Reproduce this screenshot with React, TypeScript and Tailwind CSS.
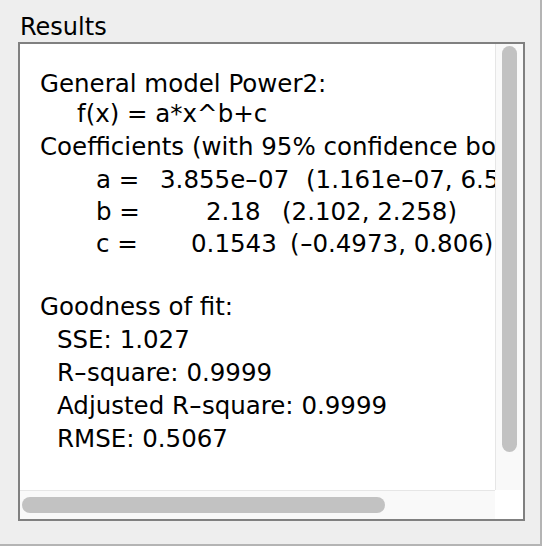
const font = "font-['DejaVu_Sans','Liberation_Sans',sans-serif]";

type CoefRow = {
  name: string;
  labelW: string;
  valueW: string;
  value: string;
  ci: string;
  h: string;
};

const coefs: CoefRow[] = [
  { name: "a =", labelW: "w-[64px]", valueW: "w-[146px]", value: "3.855e-07", ci: "(1.161e-07, 6.549e-07)", h: "h-[32px]" },
  { name: "b =", labelW: "w-[110px]", valueW: "w-[76px]", value: "2.18", ci: "(2.102, 2.258)", h: "h-[32px]" },
  { name: "c =", labelW: "w-[95px]", valueW: "w-[99px]", value: "0.1543", ci: "(-0.4973, 0.806)", h: "h-[33px]" },
];

const stats = ["SSE: 1.027", "R-square: 0.9999", "Adjusted R-square: 0.9999", "RMSE: 0.5067"];

// the original font draws its hyphen wide, like a minus sign
function Dashed({ text }: { text: string }) {
  const parts = text.split("-");
  return (
    <>
      {parts.map((p, i) => (
        <span key={i}>
          {i > 0 && <span className="mx-[2px] inline-block scale-x-[1.5]">-</span>}
          {p}
        </span>
      ))}
    </>
  );
}

function Line({ h, indent, children }: { h: string; indent: string; children: React.ReactNode }) {
  return (
    <div className={`${h} ${indent} whitespace-pre leading-[33px]`}>{children}</div>
  );
}

function ResultsText() {
  return (
    <div className={`flex-1 min-w-0 overflow-hidden bg-white pt-[23px] text-[24.5px] text-black ${font}`}>
      <div className="w-[640px]">
        <Line h="h-[30px]" indent="pl-[20px]">General model Power2:</Line>
        <Line h="h-[33px]" indent="pl-[57px]">f(x) = a*x^b+c</Line>
        <Line h="h-[33px]" indent="pl-[20px]">Coefficients (with 95% confidence bounds):</Line>
        {coefs.map((c) => (
          <div key={c.name} className={`${c.h} flex pl-[76px] whitespace-pre leading-[33px]`}>
            <span className={`${c.labelW} shrink-0`}>{c.name}</span>
            <span className={`${c.valueW} shrink-0`}>
              <Dashed text={c.value} />
            </span>
            <span className="shrink-0">
              <Dashed text={c.ci} />
            </span>
          </div>
        ))}
        <div className="h-[30px]" />
        <Line h="h-[33px]" indent="pl-[20px]">Goodness of fit:</Line>
        {stats.map((s) => (
          <Line key={s} h="h-[33px]" indent="pl-[37px]">
            <Dashed text={s} />
          </Line>
        ))}
      </div>
    </div>
  );
}

export default function App() {
  return (
    <div className="flex h-[546px] w-[542px] flex-col border-b-2 border-r-2 border-[#b4b4b4] bg-[#eeeeee] pl-[18px]">
      <div className={`h-[42px] pl-[2px] pt-[12px] text-[24px] leading-[30px] text-black ${font}`}>
        Results
      </div>
      <div className="flex h-[479px] w-[507px] flex-col border-2 border-[#808080] bg-white">
        <div className="flex min-h-0 flex-1">
          <ResultsText />
          <div className="w-[28px] shrink-0 border-l border-[#e6e6e6] bg-[#f9f9f9] pl-[6px] pt-[2px]">
            <div className="h-[406px] w-[15px] rounded-full bg-[#c2c2c2]" />
          </div>
        </div>
        <div className="flex h-[29px] shrink-0">
          <div className="flex-1 border-t border-[#e6e6e6] bg-[#f9f9f9] pl-[2px] pt-[6px]">
            <div className="h-[16px] w-[363px] rounded-full bg-[#c2c2c2]" />
          </div>
          <div className="w-[28px] bg-white" />
        </div>
      </div>
    </div>
  );
}
